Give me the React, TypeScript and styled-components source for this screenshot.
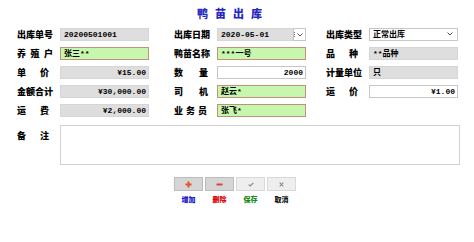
import styled, { createGlobalStyle } from "styled-components";

type Tone = "grey" | "green" | "white";

type FieldDef = {
    label: string;
    value?: string;
    tone: Tone;
    align?: "left" | "right";
    kind?: "text" | "date" | "select";
    labelWidth?: number;
};

const ROWS: (FieldDef | null)[][] = [
    [
        { label: "出库单号", value: "20200501001", tone: "grey" },
        { label: "出库日期", value: "2020-05-01", tone: "grey", kind: "date" },
        { label: "出库类型", value: "正常出库", tone: "white", kind: "select" },
    ],
    [
        { label: "养殖户", value: "张三**", tone: "green" },
        { label: "鸭苗名称", value: "***一号", tone: "green" },
        { label: "品种", value: "**品种", tone: "grey", labelWidth: 32 },
    ],
    [
        { label: "单价", value: "¥15.00", tone: "grey", align: "right", labelWidth: 32 },
        { label: "数量", value: "2000", tone: "white", align: "right", labelWidth: 34 },
        { label: "计量单位", value: "只", tone: "grey" },
    ],
    [
        { label: "金额合计", value: "¥30,000.00", tone: "grey", align: "right" },
        { label: "司机", value: "赵云*", tone: "green", labelWidth: 34 },
        { label: "运价", value: "¥1.00", tone: "white", align: "right", labelWidth: 32 },
    ],
    [
        { label: "运费", value: "¥2,000.00", tone: "grey", align: "right", labelWidth: 32 },
        { label: "业务员", value: "张飞*", tone: "green", labelWidth: 33 },
        null,
    ],
];

const ACTIONS = [
    { icon: "plus", label: "增加", color: "#1414c8", active: true },
    { icon: "minus", label: "删除", color: "#e00000", active: true },
    { icon: "check", label: "保存", color: "#138a13", active: false },
    { icon: "cross", label: "取消", color: "#111111", active: false },
] as const;

const Chevron = () => (
    <svg width="6" height="4" viewBox="0 0 6 4" aria-hidden>
        <path d="M0.5 0.5 L3 3 L5.5 0.5" fill="none" stroke="#555" strokeWidth="1" />
    </svg>
);

const ActionIcon = ({ name }: { name: string }) => {
    if (name === "plus")
        return (
            <svg width="7" height="7" viewBox="0 0 7 7" aria-hidden>
                <path d="M3.5 0.5 V6.5 M0.5 3.5 H6.5" stroke="#e2572a" strokeWidth="2" />
            </svg>
        );
    if (name === "minus")
        return (
            <svg width="7" height="7" viewBox="0 0 7 7" aria-hidden>
                <path d="M0.5 3.5 H6.5" stroke="#d9443a" strokeWidth="2" />
            </svg>
        );
    if (name === "check")
        return (
            <svg width="6" height="5" viewBox="0 0 6 5" aria-hidden>
                <path d="M0.6 2.6 L2.2 4 L5.4 0.8" fill="none" stroke="#8a8a8a" strokeWidth="1.2" />
            </svg>
        );
    return (
        <svg width="5" height="5" viewBox="0 0 5 5" aria-hidden>
            <path d="M0.7 0.7 L4.3 4.3 M4.3 0.7 L0.7 4.3" stroke="#8a8a8a" strokeWidth="1.1" />
        </svg>
    );
};

const Field = ({ def }: { def: FieldDef }) => (
    <FieldCell>
        <Label $width={def.labelWidth ?? 36}>
            {def.label.split("").map((c, i) => (
                <span key={i}>{c}</span>
            ))}
        </Label>
        <Box $tone={def.tone} $align={def.align ?? "left"}>
            <BoxText>{def.value}</BoxText>
            {def.kind === "date" ? (
                <DateButton>
                    <Dots />
                    <Chevron />
                </DateButton>
            ) : null}
            {def.kind === "select" ? (
                <SelectArrow>
                    <Chevron />
                </SelectArrow>
            ) : null}
        </Box>
    </FieldCell>
);

const App = () => {
    return (
        <Page>
            <GlobalStyle />
            <Title>鸭苗出库</Title>
            <FormGrid>
                {ROWS.map((row, r) =>
                    row.map((def, c) => (def ? <Field key={`${r}-${c}`} def={def} /> : <span key={`${r}-${c}`} />))
                )}
            </FormGrid>
            <RemarkRow>
                <Label $width={32} $top>
                    <span>备</span>
                    <span>注</span>
                </Label>
                <RemarkBox />
            </RemarkRow>
            <Toolbar>
                {ACTIONS.map((a) => (
                    <Action key={a.label}>
                        <ActionButton type="button" $active={a.active}>
                            <ActionIcon name={a.icon} />
                        </ActionButton>
                        <ActionLabel $color={a.color}>{a.label}</ActionLabel>
                    </Action>
                ))}
            </Toolbar>
        </Page>
    );
};

export default App;

const GlobalStyle = createGlobalStyle`
    html, body {
        margin: 0;
        padding: 0;
        background: #ffffff;
    }
    body {
        font-family: "Noto Sans CJK SC", "Liberation Sans", sans-serif;
    }
`;

const Page = styled.div`
    width: 474px;
    height: 242px;
    box-sizing: border-box;
    padding: 7px 0 0 17px;
    display: flex;
    flex-direction: column;
    background: #ffffff;
`;

const Title = styled.div`
    margin-left: 180px;
    height: 13px;
    line-height: 13px;
    font-size: 11px;
    font-weight: 900;
    letter-spacing: 7px;
    color: #2626c0;
    font-family: "Noto Sans CJK SC", serif;
`;

const FormGrid = styled.div`
    margin-top: 8px;
    display: grid;
    grid-template-columns: 157px 152px 132px;
    grid-auto-rows: 13px;
    row-gap: 6px;
`;

const FieldCell = styled.div`
    display: flex;
    align-items: center;
    gap: 7px;
`;

const Label = styled.div<{ $width: number; $top?: boolean }>`
    width: ${(p) => p.$width}px;
    margin-right: ${(p) => 36 - p.$width}px;
    display: flex;
    justify-content: space-between;
    align-self: ${(p) => (p.$top ? "flex-start" : "center")};
    margin-top: ${(p) => (p.$top ? "4px" : "0")};
    font-size: 9px;
    line-height: 13px;
    font-weight: 900;
    color: #000;
    white-space: nowrap;
`;

const TONES: Record<Tone, { bg: string; border: string }> = {
    grey: { bg: "#dedede", border: "#d6d6d6" },
    green: { bg: "#c6f7ad", border: "#c2907c" },
    white: { bg: "#ffffff", border: "#c6c6c6" },
};

const Box = styled.div<{ $tone: Tone; $align: "left" | "right" }>`
    position: relative;
    width: 89px;
    height: 13px;
    box-sizing: border-box;
    display: flex;
    align-items: center;
    justify-content: ${(p) => (p.$align === "right" ? "flex-end" : "flex-start")};
    padding: 0 2px 0 3px;
    background: ${(p) => TONES[p.$tone].bg};
    border: 1px solid ${(p) => TONES[p.$tone].border};
    font-family: "Liberation Mono", "Noto Sans CJK SC", monospace;
    font-size: 8px;
    font-weight: 700;
    color: #000;
    white-space: nowrap;
`;

const BoxText = styled.span`
    line-height: 11px;
`;

const DateButton = styled.div`
    position: absolute;
    top: -1px;
    right: -1px;
    width: 13px;
    height: 13px;
    box-sizing: border-box;
    background: #ffffff;
    border: 1px solid #c6c6c6;
    display: flex;
    align-items: center;
    justify-content: flex-end;
    gap: 1px;
    padding-right: 2px;
`;

const Dots = styled.span`
    width: 1px;
    height: 5px;
    border-left: 1px dotted #777;
`;

const SelectArrow = styled.div`
    position: absolute;
    right: 4px;
    top: 3px;
    display: flex;
`;

const RemarkRow = styled.div`
    margin-top: 8px;
    display: flex;
    gap: 7px;
`;

const RemarkBox = styled.div`
    width: 400px;
    height: 40px;
    box-sizing: border-box;
    border: 1px solid #d2d2d2;
    background: #ffffff;
`;

const Toolbar = styled.div`
    margin-top: 12px;
    margin-left: 157px;
    display: flex;
    gap: 2px;
`;

const Action = styled.div`
    display: flex;
    flex-direction: column;
    align-items: center;
    gap: 4px;
`;

const ActionButton = styled.button<{ $active: boolean }>`
    width: 29px;
    height: 14px;
    padding: 0;
    display: flex;
    align-items: center;
    justify-content: center;
    box-sizing: border-box;
    background: ${(p) => (p.$active ? "#d5d5d5" : "#eeeeee")};
    border: 1px solid ${(p) => (p.$active ? "#bdbdbd" : "#d9d9d9")};
    cursor: pointer;
`;

const ActionLabel = styled.span<{ $color: string }>`
    font-size: 7px;
    line-height: 8px;
    font-weight: 900;
    color: ${(p) => p.$color};
`;
